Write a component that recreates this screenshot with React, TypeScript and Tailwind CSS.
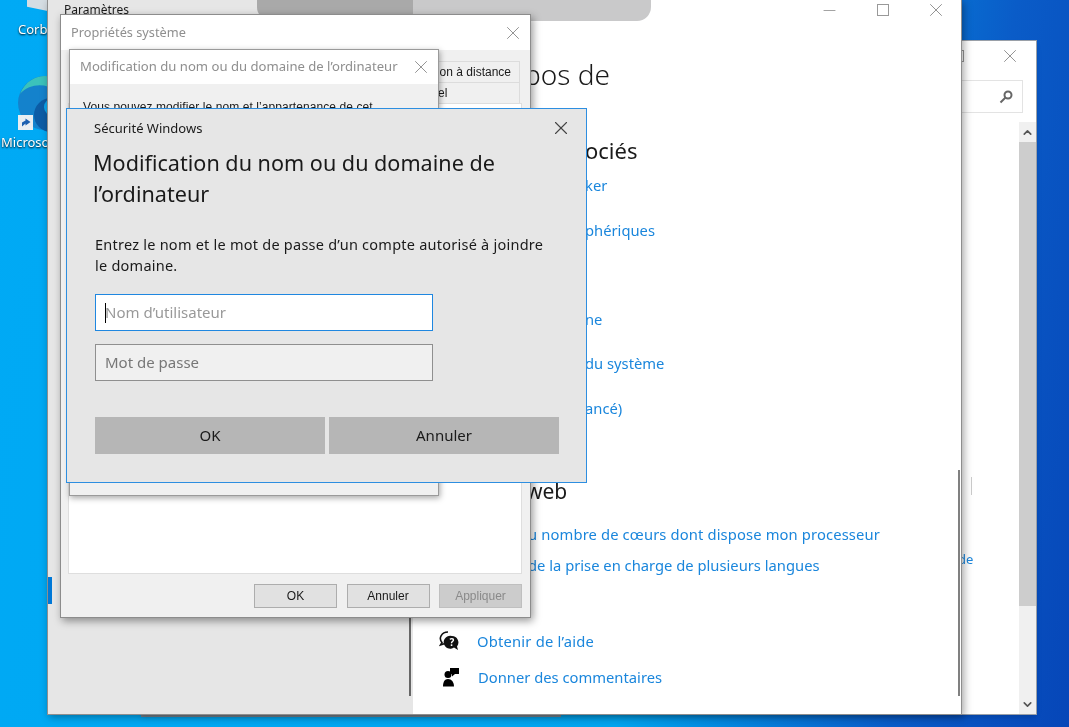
import { X, Minus, ChevronUp, ChevronDown } from 'lucide-react';

const linkText = 'whitespace-nowrap text-[#1a86dc] text-[14.75px] leading-5';
const winBtn = 'flex h-[24px] w-[83px] items-center justify-center border';
const relatedLinks = ['ker', 'phériques', '', 'ne', 'du système', 'ancé)'];

function HelpIcon() {
  return (
    <svg width="22" height="20" viewBox="0 0 22 20">
      <path d="M9 1a7.500 6.500 0 0 0-6 10.500L1.500 14 6 12.500" fill="none" stroke="#111" strokeWidth="1.600" />
      <path d="M13 5a6.500 6.500 0 0 1 5 10.500L19 19l-4-2.500A6.500 6.500 0 1 1 13 5z" fill="#111" />
      <text x="13" y="15" fontSize="10" fontWeight="700" fill="#fff" textAnchor="middle">?</text>
    </svg>
  );
}

function FeedbackIcon() {
  return (
    <svg width="18" height="20" viewBox="0 0 18 20">
      <circle cx="6" cy="7.500" r="3.500" fill="#000" />
      <path d="M1 19.500c0-4.500 1.500-7.500 5-7.500s6 3 6 7.500z" fill="#000" />
      <path d="M8 1h9v6h-4l-3 2.500V7H8z" fill="#000" />
    </svg>
  );
}

function EdgeIcon() {
  return (
    <svg width="40" height="58" viewBox="0 0 40 58">
      <circle cx="29" cy="29" r="27" fill="#1482cc" />
      <path d="M4 20C9 7 20 2 29 2c4 0 8 1 11 3v12C30 9 14 9 4 20z" fill="#3bc2bb" />
      <circle cx="35" cy="41" r="17" fill="#0c5ca6" />
      <circle cx="37" cy="33" r="9" fill="#0aa6ee" />
      <rect x="2" y="41" width="15" height="15" fill="#e9eef2" />
      <path d="M6 52.500v-4l3.500-2v-2l5 3.500-5 3.500v-2z" fill="#1b5fb0" />
    </svg>
  );
}

function LensIcon() {
  return (
    <svg width="14" height="14" viewBox="0 0 14 14" fill="none" stroke="#666" strokeWidth="2">
      <circle cx="9" cy="5" r="3.500" />
      <path d="M6.500 7.500 1.500 12.500" />
    </svg>
  );
}

export default function App() {
  return (
    <div className="relative h-[727px] w-[1069px] overflow-hidden bg-[linear-gradient(100deg,#00aaf5_0%,#00a4ee_62%,#0a5cc8_85%,#0646b8_100%)] font-['Noto_Sans','Open_Sans',sans-serif] text-[#1a1a1a] blur-[0.45px]">
      {/* desktop icons */}
      <div className="absolute left-[18px] top-[21px] text-[13px] leading-4 text-white [text-shadow:0_1px_2px_#000]">Corbeille</div>
      <div className="absolute left-[27px] top-[-6px] h-[15px] w-[22px] skew-y-12 bg-[#d5dde3]" />
      <div className="absolute left-[16px] top-[74px]"><EdgeIcon /></div>
      <div className="absolute left-[1px] top-[134px] text-[13px] leading-4 text-white [text-shadow:0_1px_2px_#000]">Microsoft Edge</div>

      <div className="absolute left-[141px] top-[713px] h-[4px] w-[420px] bg-[#7d8a96]" />

      {/* back window */}
      <div className="absolute left-[140px] top-[40px] flex h-[675px] w-[897px] flex-col border border-[#9aa0a8] bg-white shadow-md">
        <div className="flex h-[39px] shrink-0 justify-end pr-[15px] pt-[4px] text-[#8a8a8a]">
          <div className="mr-[35px] mt-[5px] h-[12px] w-[12px] border border-[#999]" />
          <X size={22} strokeWidth={1} />
        </div>
        <div className="flex shrink-0 justify-end pr-[13px]">
          <div className="flex h-[33px] w-[400px] items-center justify-end border border-[#e3e3e3] pr-[9px]">
            <LensIcon />
          </div>
        </div>
        <div className="mt-[9px] flex min-h-0 flex-1 justify-end">
          <div className="flex w-[17px] flex-col items-center bg-[#f0f0f0]">
            <div className="flex h-[20px] items-center"><ChevronUp className="text-[#555]" size={13} strokeWidth={3} /></div>
            <div className="h-[464px] w-full bg-[#cdcdcd]" />
            <ChevronDown className="mb-[3px] mt-auto text-[#555]" size={13} strokeWidth={3} />
          </div>
        </div>
        <div className="absolute left-[817px] top-[509px] text-[13px] text-[#1a86dc]">de</div>
        <div className="absolute left-[830px] top-[436px] h-[18px] w-px bg-[#ccc]" />
      </div>

      {/* settings window */}
      <div className="absolute left-[47px] top-0 flex h-[715px] w-[915px] border-x border-b border-[#8e8e8e] shadow-[2px_2px_8px_rgba(0,0,0,0.35)]">
        <div className="flex w-[365px] shrink-0 flex-col bg-[#e6e6e6]">
          <div className="pl-[16px] pt-[2px] text-[12px] leading-4">Paramètres</div>
          <div className="mt-[559px] h-[27px] w-[4px] bg-[#0078d7]" />
        </div>
        <div className="relative flex min-w-0 flex-1 flex-col bg-white">
          <div className="flex h-[20px] shrink-0 items-center justify-end text-[#8a8a8a]">
            <div className="flex w-[53px] justify-center"><Minus size={19} strokeWidth={1} /></div>
            <div className="flex w-[53px] justify-center"><div className="h-[12px] w-[12px] border-[1.5px] border-[#999]" /></div>
            <div className="-mr-px flex w-[53px] justify-center"><X size={22} strokeWidth={1} /></div>
          </div>
          <div className="ml-[111px] mt-[34px] whitespace-nowrap text-[28px] font-light leading-10">pos de</div>
          <div className="ml-[172px] mt-[42px] whitespace-nowrap text-[22px] leading-7">ociés</div>
          <div className="ml-[172px] mt-[11px] flex flex-col gap-[24.6px]">
            {relatedLinks.map((t, i) => (
              <div key={i} className={`${linkText} h-5`}>{t}</div>
            ))}
          </div>
          <div className="ml-[113px] mt-[59px] whitespace-nowrap text-[21px] leading-7">web</div>
          <div className="ml-[115px] mt-[19px] flex flex-col gap-[11px]">
            <div className={`${linkText} tracking-[0.13px]`}>u nombre de cœurs dont dispose mon processeur</div>
            <div className={linkText}>de la prise en charge de plusieurs langues</div>
          </div>
          <div className="ml-[26px] mt-[56px] flex flex-col gap-[16px]">
            <div className="flex h-5 items-center">
              <div className="w-[38px] shrink-0"><HelpIcon /></div>
              <div className={`${linkText} tracking-[0.2px]`}>Obtenir de l’aide</div>
            </div>
            <div className="flex h-5 items-center">
              <div className="w-[39px] shrink-0 pl-[3px]"><FeedbackIcon /></div>
              <div className={linkText}>Donner des commentaires</div>
            </div>
          </div>
          <div className="absolute left-[-4px] top-[617px] h-[79px] w-[2px] bg-[#666]" />
          <div className="absolute left-[545px] top-[470px] h-[226px] w-[2px] bg-[#808080]" />
        </div>
      </div>

      {/* search pill */}
      <div className="absolute left-[257px] top-0 flex h-[21px] w-[394px] overflow-hidden rounded-b-[14px]">
        <div className="w-[156px] bg-[#a9a9a9]" />
        <div className="flex-1 bg-[#c9c9ca]" />
      </div>

      {/* system properties */}
      <div className="absolute left-[60px] top-[14px] flex h-[604px] w-[471px] flex-col border border-[#8c8c8c] bg-[#f0f0f0] shadow-[2px_3px_8px_rgba(0,0,0,0.4)]">
        <div className="flex h-[35px] shrink-0 items-center justify-between bg-white pl-[10px] pr-[6px]">
          <span className="text-[12.75px] text-[#8f8f8f]">Propriétés système</span>
          <X className="text-[#8a8a8a]" size={22} strokeWidth={1} />
        </div>
        <div className="flex flex-1 flex-col pl-[7px] pr-[8px] font-['Liberation_Sans',sans-serif] text-[12px]">
          <div className="mt-[11px] flex justify-end pr-[2px]">
            <div className="h-[22px] w-[103px] border border-[#dcdcdc] pr-[8px] text-right leading-5">on à distance</div>
          </div>
          <div className="flex justify-end pr-[2px]">
            <div className="h-[20px] w-[103px] border-x border-[#dcdcdc] pl-[20px] leading-5">el</div>
          </div>
          <div className="h-[471px] border border-[#dedede] bg-white" />
          <div className="mt-[10px] flex justify-end gap-[9.5px]">
            <div className={`${winBtn} border-[#adadad] bg-[#e1e1e1]`}>OK</div>
            <div className={`${winBtn} border-[#adadad] bg-[#e1e1e1]`}>Annuler</div>
            <div className={`${winBtn} border-[#bfbfbf] bg-[#cccccc] text-[#8a8a8a]`}>Appliquer</div>
          </div>
        </div>
      </div>

      {/* name change dialog */}
      <div className="absolute left-[69px] top-[49px] flex h-[447px] w-[370px] flex-col border border-[#9a9a9a] bg-[#f0f0f0] shadow-[1px_2px_6px_rgba(0,0,0,0.35)]">
        <div className="flex h-[34px] shrink-0 items-center justify-between bg-white pl-[10px] pr-[6px]">
          <span className="whitespace-nowrap text-[13.1px] text-[#8f8f8f]">Modification du nom ou du domaine de l’ordinateur</span>
          <X className="text-[#8a8a8a]" size={22} strokeWidth={1} />
        </div>
        <div className="whitespace-nowrap pl-[13px] pt-[15px] font-['Liberation_Sans',sans-serif] text-[12px] leading-4 tracking-[0.08px]">Vous pouvez modifier le nom et l’appartenance de cet</div>
      </div>

      {/* windows security */}
      <div className="absolute left-[66px] top-[108px] flex h-[375px] w-[521px] flex-col border border-[#2d8ee0] bg-[#e6e6e6] pl-[26px] pr-[27px]">
        <div className="-mr-[13px] flex items-center justify-between pl-px pt-[8px]">
          <span className="text-[13px] leading-5">Sécurité Windows</span>
          <X className="text-[#444]" size={22} strokeWidth={1.250} />
        </div>
        <h1 className="mt-[8px] whitespace-nowrap text-[21.6px] font-normal leading-[31px]">Modification du nom ou du domaine de<br />l’ordinateur</h1>
        <p className="ml-[2px] mt-[25px] whitespace-nowrap text-[14.5px] leading-[21px] tracking-[0.24px]">Entrez le nom et le mot de passe d’un compte autorisé à joindre<br />le domaine.</p>
        <div className="ml-[2px] mt-[18px] flex h-[37px] w-[338px] items-center border border-[#1f87e0] bg-white pl-[9px] text-[15px] text-[#999]">
          <span className="-mr-px h-[20px] w-px bg-black" />
          Nom d’utilisateur
        </div>
        <div className="ml-[2px] mt-[13px] flex h-[37px] w-[338px] items-center border border-[#8f8f8f] bg-[#f0f0f0] pl-[9px] text-[15px] text-[#777]">Mot de passe</div>
        <div className="ml-[2px] mt-[36px] grid w-[464px] grid-cols-2 gap-[4px] text-[15px]">
          <div className="flex h-[37px] items-center justify-center bg-[#b6b6b6]">OK</div>
          <div className="flex h-[37px] items-center justify-center bg-[#b6b6b6]">Annuler</div>
        </div>
      </div>
    </div>
  );
}
